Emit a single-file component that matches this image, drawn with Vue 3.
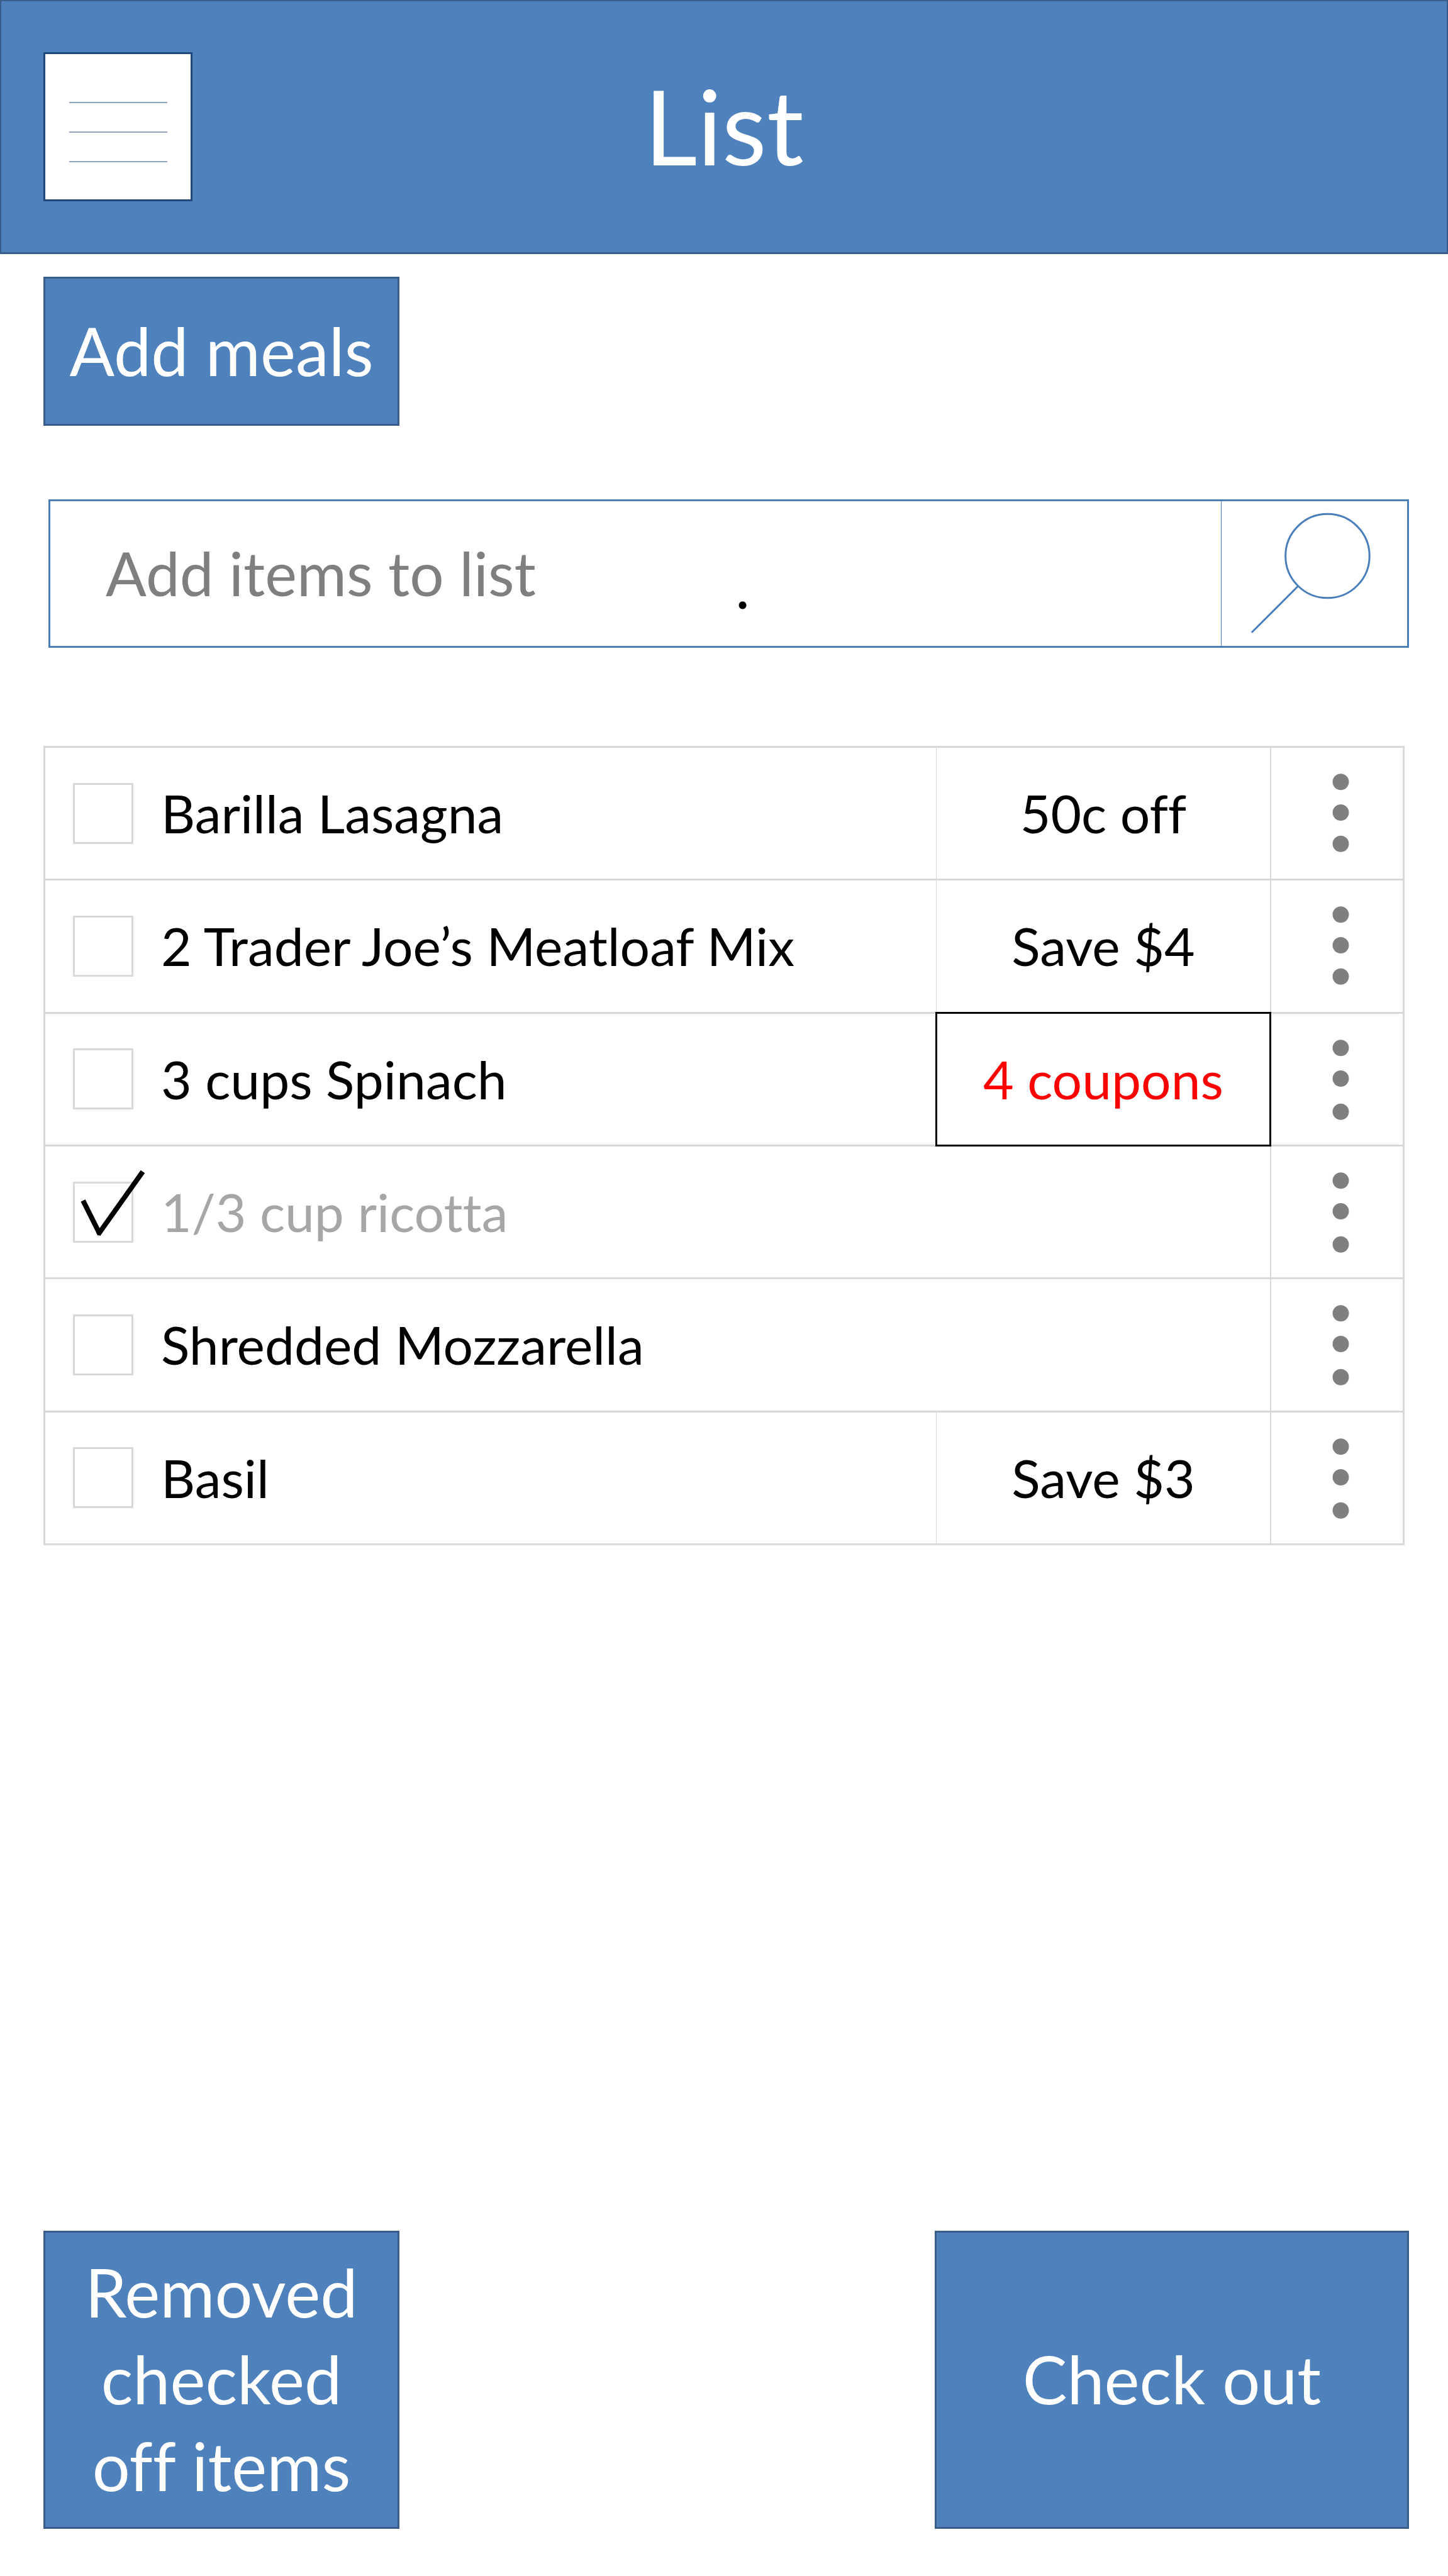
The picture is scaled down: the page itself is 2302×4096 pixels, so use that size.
<script setup>
import { ref } from 'vue'

const query = ref('')

const items = ref([
  { id: 1, name: 'Barilla Lasagna', offer: '50c off', checked: false, lastDot: 153 },
  { id: 2, name: '2 Trader Joe’s Meatloaf Mix', offer: 'Save $4', checked: false, lastDot: 153 },
  { id: 3, name: '3 cups Spinach', offer: '4 coupons', highlight: true, checked: false, lastDot: 156 },
  { id: 4, name: '1/3 cup ricotta', offer: '', checked: true, lastDot: 156 },
  { id: 5, name: 'Shredded Mozzarella', offer: '', checked: false, lastDot: 156 },
  { id: 6, name: 'Basil', offer: 'Save $3', checked: false, lastDot: 156 },
])
</script>

<template>
  <div class="page">
    <header class="topbar">
      <button class="menu" type="button" aria-label="Menu">
        <svg viewBox="0 0 156 96" aria-hidden="true">
          <path d="M0 1H156M0 48H156M0 95H156" />
        </svg>
      </button>
      <h1>List</h1>
    </header>

    <main>
      <button class="action add-meals" type="button">Add meals</button>

      <form class="search" @submit.prevent>
        <input v-model="query" type="text" placeholder="Add items to list" aria-label="Add items to list" />
        <span class="mark">.</span>
        <button type="submit" aria-label="Search">
          <svg viewBox="0 0 296 230" aria-hidden="true">
            <circle cx="169" cy="87" r="67" />
            <path d="M122 135L48 209" />
          </svg>
        </button>
      </form>

      <table class="items">
        <colgroup>
          <col />
          <col class="col-offer" />
          <col class="col-more" />
        </colgroup>
        <tbody>
          <tr v-for="item in items" :key="item.id">
            <td :colspan="item.offer ? 1 : 2" :class="{ split: item.offer }">
              <div class="item">
                <span class="box">
                  <input :id="`item-${item.id}`" v-model="item.checked" type="checkbox" />
                  <svg v-if="item.checked" class="tick" viewBox="0 0 120 120" aria-hidden="true">
                    <path d="M16 50L43 104M40 104L111 4" />
                  </svg>
                </span>
                <label :for="`item-${item.id}`" :class="{ done: item.checked }">{{ item.name }}</label>
              </div>
            </td>
            <td v-if="item.offer" class="offer" :class="{ highlight: item.highlight }">{{ item.offer }}</td>
            <td class="more">
              <button type="button" :aria-label="`Options for ${item.name}`">
                <svg viewBox="0 0 210 208" aria-hidden="true">
                  <circle cx="111" cy="54" r="13" />
                  <circle cx="111" cy="103" r="13" />
                  <circle cx="111" :cy="item.lastDot" r="13" />
                </svg>
              </button>
            </td>
          </tr>
        </tbody>
      </table>

      <footer>
        <button class="action remove" type="button">Removed checked off items</button>
        <button class="action checkout" type="button">Check out</button>
      </footer>
    </main>
  </div>
</template>

<style>
body {
  margin: 0;
  background: #fff;
}
</style>

<style scoped>
.page {
  display: flex;
  flex-direction: column;
  min-height: 100vh;
  font-family: Lato, "Open Sans", sans-serif;
  font-variant-ligatures: none;
  color: #000;
}

.page *,
.page *::after {
  box-sizing: border-box;
}

button,
input {
  margin: 0;
  font: inherit;
  font-variant-ligatures: none;
  color: inherit;
}

button {
  padding: 0;
  cursor: pointer;
}

svg {
  display: block;
  fill: none;
}

.topbar {
  display: grid;
  grid-template-columns: 1fr auto 1fr;
  align-items: center;
  height: 404px;
  padding: 0 67px;
  border: 2px solid #385d8a;
  border-bottom-width: 3px;
  background: #4f81bd;
}

.topbar h1 {
  margin: 0;
  padding-bottom: 4px;
  font-size: 164px;
  font-weight: 400;
  line-height: 192px;
  color: #fff;
}

.menu {
  display: grid;
  place-items: center;
  width: 237px;
  height: 237px;
  padding-top: 16px;
  border: 3px solid #1f497d;
  background: #fff;
}

.menu svg {
  width: 156px;
  height: 96px;
  stroke: #1f497d;
  stroke-width: 1;
}

main {
  display: flex;
  flex: 1;
  flex-direction: column;
  padding: 36px 62px 75px 69px;
}

.action {
  padding: 0 0 4px;
  border: 3px solid #385d8a;
  background: #4f81bd;
  font-size: 106px;
  line-height: 138px;
  color: #fff;
}

.add-meals {
  width: 566px;
  height: 237px;
}

.search {
  position: relative;
  display: flex;
  height: 236px;
  margin: 117px 0 0 8px;
  border: 3px solid #4a7ebb;
}

.search input {
  flex: 1;
  min-width: 0;
  padding: 0 88px 4px;
  border: 0;
  outline: 0;
  background: none;
  font-size: 96px;
}

.search input::placeholder {
  color: #7f7f7f;
  opacity: 1;
}

.search button {
  width: 296px;
  border: 0;
  border-left: 1px solid #4a7ebb;
  background: none;
}

.search svg {
  width: 100%;
  height: 230px;
  stroke: #4a7ebb;
  stroke-width: 3;
}

.mark {
  position: absolute;
  bottom: 48px;
  left: 50.5%;
  font-size: 96px;
  line-height: 96px;
}

.items {
  width: calc(100% - 7px);
  height: 1271px;
  margin-top: 156px;
  border-top: 3px solid #d9d9d9;
  border-left: 3px solid #d9d9d9;
  border-spacing: 0;
  table-layout: fixed;
  font-size: 84px;
  line-height: 96px;
}

.col-offer {
  width: 532px;
}

.col-more {
  width: 212px;
}

.items td {
  padding: 0;
  border-right: 2px solid #d9d9d9;
  border-bottom: 3px solid #d9d9d9;
}

.items td.split {
  border-right-width: 1px;
}

.items td.more {
  border-right-width: 3px;
}

.item {
  display: flex;
  align-items: center;
  gap: 44px;
  padding-left: 44px;
}

.box {
  position: relative;
  flex: none;
  width: 96px;
  height: 97px;
}

.box input {
  display: block;
  width: 100%;
  height: 100%;
  border: 3px solid #d9d9d9;
  background: #fff;
  appearance: none;
}

.tick {
  position: absolute;
  top: -20px;
  left: 0;
  width: 120px;
  height: 120px;
  stroke: #000;
  stroke-width: 8;
  pointer-events: none;
}

.done {
  color: #a6a6a6;
}

.items td.offer {
  text-align: center;
}

.highlight {
  position: relative;
  color: #f00;
}

.highlight::after {
  content: "";
  position: absolute;
  inset: -3px -2px;
  border: 3px solid #000;
}

.more button {
  display: block;
  width: 100%;
  border: 0;
  background: none;
}

.more svg {
  width: 100%;
  height: 208px;
  fill: #7f7f7f;
}

footer {
  display: flex;
  justify-content: space-between;
  margin-top: auto;
}

footer .action {
  height: 474px;
}

.remove {
  width: 566px;
  padding: 0 56px 4px;
}

.checkout {
  width: 754px;
}
</style>
